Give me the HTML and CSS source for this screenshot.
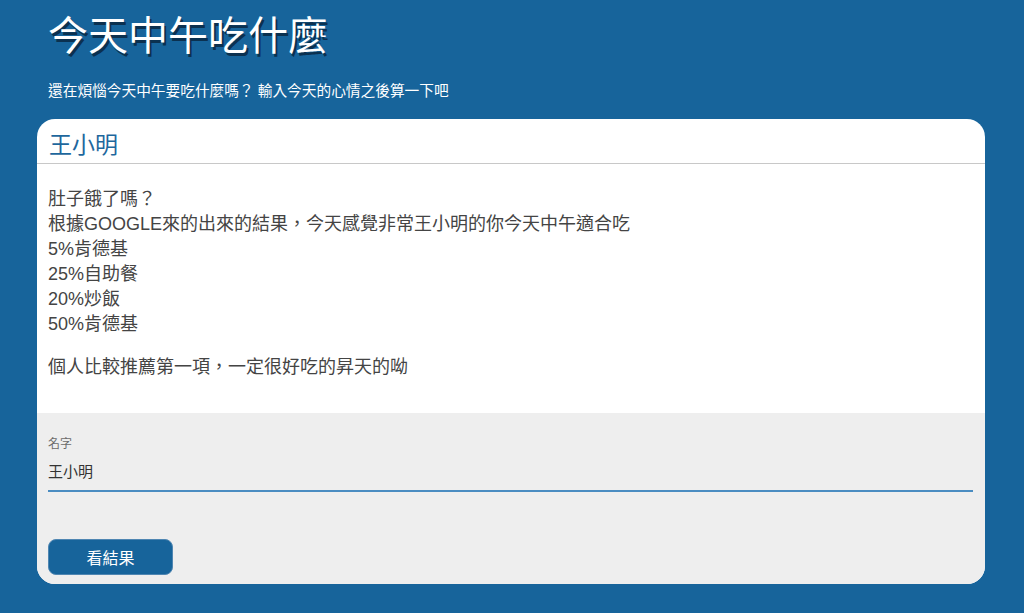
FILE: index.html
```html
<!DOCTYPE html>
<html lang="zh-Hant">
<head>
<meta charset="utf-8">
<title>今天中午吃什麼</title>
<link rel="stylesheet" href="styles.css">
</head>
<body>
<header class="page-head">
  <h1 class="title">今天中午吃什麼</h1>
  <p class="subtitle">還在煩惱今天中午要吃什麼嗎？ 輸入今天的心情之後算一下吧</p>
</header>
<main class="card">
  <div class="card-title">王小明</div>
  <div class="card-body">
    <p>肚子餓了嗎？<br>根據GOOGLE來的出來的結果，今天感覺非常王小明的你今天中午適合吃<br>5%肯德基<br>25%自助餐<br>20%炒飯<br>50%肯德基</p>
    <p>個人比較推薦第一項，一定很好吃的昇天的呦</p>
  </div>
  <div class="card-form">
    <label class="field-label" for="name">名字</label>
    <input class="field-input" id="name" type="text" value="王小明">
    <button class="btn" type="button">看結果</button>
  </div>
</main>
</body>
</html>
```

FILE: styles.css
```css
html, body {
  margin: 0;
  padding: 0;
}
body {
  background: #17649b;
  font-family: "Liberation Sans", "Noto Sans CJK TC", sans-serif;
  height: 613px;
  overflow: hidden;
}
.page-head {
  padding: 12px 0 0 48px;
  color: #fff;
}
.title {
  margin: 0;
  font-size: 40px;
  line-height: 48px;
  font-weight: 400;
  text-shadow: 2px 3px 0 #0b3150;
}
.subtitle {
  margin: 21px 0 18px;
  font-size: 14.7px;
  line-height: 20px;
}
.card {
  margin: 0 39px 0 37px;
  background: #fff;
  border-radius: 18px;
  overflow: hidden;
}
.card-title {
  padding: 8px 12px 0;
  height: 36px;
  line-height: 36px;
  font-size: 23px;
  color: #1e679d;
  border-bottom: 1px solid #c8c8c8;
}
.card-body {
  padding: 23px 11px 33px;
  font-size: 18px;
  line-height: 25px;
  color: #444;
}
.card-body p {
  margin: 0;
}
.card-body p + p {
  margin-top: 18px;
}
.card-form {
  background: #eeeeee;
  padding: 24px 12px 9px 11px;
}
.field-label {
  display: block;
  font-size: 12px;
  line-height: 14px;
  color: #6b6b6b;
  margin-bottom: 11px;
}
.field-input {
  display: block;
  width: 100%;
  box-sizing: border-box;
  height: 30px;
  padding: 0 0 11px;
  margin: 0;
  border: 0;
  border-bottom: 2px solid #4a8cc1;
  background: transparent;
  font-family: inherit;
  font-size: 15px;
  line-height: 17px;
  color: #333;
  outline: none;
}
.btn {
  display: block;
  margin-top: 47px;
  width: 125px;
  height: 36px;
  border: 1px solid #4f86b2;
  border-radius: 8px;
  background: #17649b;
  color: #fff;
  font-family: inherit;
  font-size: 16px;
  padding: 0;
}
```
